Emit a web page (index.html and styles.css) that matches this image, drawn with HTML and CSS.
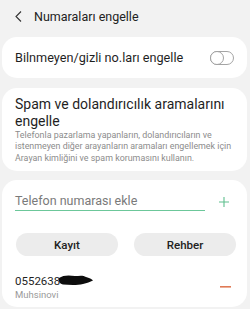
FILE: index.html
```html
<!DOCTYPE html>
<html>
<head>
<meta charset="utf-8">
<link rel="stylesheet" href="styles.css">
</head>
<body>
<div class="header">
  <svg class="back" width="7" height="11" viewBox="0 0 7 11"><path d="M6 0.5 L1 5.5 L6 10.5" fill="none" stroke="#333" stroke-width="1.1"/></svg>
  <span class="title">Numaraları engelle</span>
</div>
<div class="card row">
  <span class="label">Bilnmeyen/gizli no.ları engelle</span>
  <svg class="toggle" width="24" height="14" viewBox="0 0 24 14"><rect x="0.5" y="0.5" width="23" height="13" rx="6.5" fill="none" stroke="#9a9a9a" stroke-width="0.9"/><circle cx="7" cy="7" r="6.5" fill="#fff" stroke="#9a9a9a" stroke-width="0.9"/></svg>
</div>
<div class="card spam">
  <div class="spam-title">Spam ve dolandırıcılık aramalarını engelle</div>
  <div class="spam-desc">Telefonla pazarlama yapanların, dolandırıcıların ve istenmeyen diğer arayanların aramaları engellemek için Arayan kimliğini ve spam korumasını kullanın.</div>
</div>
<div class="card add">
  <div class="input-row">
    <div class="input">Telefon numarası ekle</div>
    <svg class="plus" width="10" height="10" viewBox="0 0 10 10"><path d="M5 0 V10 M0 5 H10" stroke="#5fbf8e" stroke-width="1.1"/></svg>
  </div>
  <div class="buttons">
    <div class="btn">Kayıt</div>
    <div class="btn">Rehber</div>
  </div>
  <div class="entry">
    <div class="entry-text">
      <div class="number">0552638<svg class="scribble" width="34" height="13" viewBox="0 0 34 13"><path d="M0 4 C4 1 10 1 16 2 C20 2 24 1 27 3 C30 4 33 5 34 6.5 C31 8 28 9 24 10 C18 11.5 10 11 4 10.5 C2 10 0 9 0 7 Z" fill="#0d0d0d"/></svg></div>
      <div class="name">Muhsinovi</div>
    </div>
    <svg class="minus" width="11" height="2" viewBox="0 0 11 2"><rect width="11" height="1.6" fill="#e07a55"/></svg>
  </div>
</div>
</body>
</html>
```
FILE: styles.css
```css
* { box-sizing: border-box; }
html, body { margin: 0; padding: 0; }
body {
  width: 250px;
  height: 309px;
  overflow: hidden;
  background: #f2f2f2;
  font-family: Roboto, "Noto Sans", sans-serif;
  color: #1f1f1f;
}
.header {
  height: 33px;
  display: flex;
  align-items: center;
  padding-left: 15px;
  gap: 12px;
}
.title { font-size: 12.5px; color: #222; }
.card {
  background: #fff;
  border-radius: 15px;
  margin: 4px 3px 0 2px;
}
.row {
  height: 41px;
  display: flex;
  align-items: center;
  justify-content: space-between;
  padding: 0 13px 0 13px;
}
.label { font-size: 12.7px; }
.spam {
  margin-top: 10px;
  padding: 7.5px 12px 7px 13px;
  height: 83px;
}
.spam-title { font-size: 14px; line-height: 17px; }
.spam-desc { font-size: 8.9px; line-height: 11.5px; color: #8c8c8c; }
.add {
  margin-top: 9px;
  padding: 13px 13px 0 13px;
  height: 127px;
}
.input-row { display: flex; align-items: center; gap: 14px; }
.input {
  flex: 1;
  font-size: 12.5px;
  line-height: 16px;
  color: #7a7a7a;
  padding: 0 0 1px 0;
  border-bottom: 1px solid #6cc79a;
}
.plus { margin-right: 5px; }
.buttons { display: flex; gap: 16px; margin-top: 22px; padding: 0 0 0 1px; width: 221px; }
.btn {
  flex: 1;
  height: 23px;
  border-radius: 12px;
  background: #ececec;
  display: flex;
  align-items: center;
  justify-content: center;
  font-size: 11.5px;
  font-weight: 500;
  color: #222;
}
.entry { display: flex; align-items: center; justify-content: space-between; margin-top: 18px; }
.number { font-size: 11.5px; line-height: 15px; display: flex; align-items: center; }
.scribble { margin-left: -1px; margin-top: -2px; }
.name { font-size: 9.5px; line-height: 12px; color: #9a9a9a; }
.minus { margin-right: 3px; margin-top: -1px; }
```
